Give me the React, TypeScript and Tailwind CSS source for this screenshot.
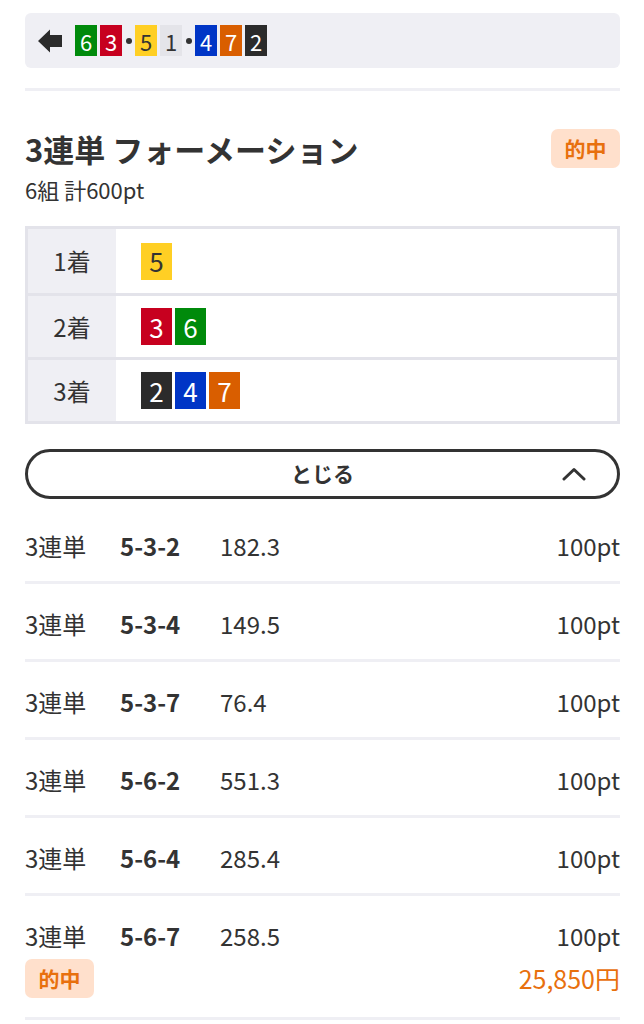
import React from "react";

const C: Record<string, string> = {
  "1": "bg-[#e4e4e9] text-[#333333]",
  "2": "bg-[#2b2b2b] text-white",
  "3": "bg-[#c7001f] text-white",
  "4": "bg-[#0035c6] text-white",
  "5": "bg-[#ffcf24] text-[#333333]",
  "6": "bg-[#008a0b] text-white",
  "7": "bg-[#d95e00] text-white",
};

function SmallBox({ n }: { n: string }) {
  return (
    <div className={`w-[22px] h-[31px] flex items-center justify-center text-[22px] leading-none ${C[n]}`}>
      {n}
    </div>
  );
}

function BigBox({ n }: { n: string }) {
  return (
    <div className={`w-[31px] h-[37px] flex items-center justify-center text-[26px] leading-none ${C[n]}`}>
      {n}
    </div>
  );
}

function Dot() {
  return (
    <div className="w-[13px] flex items-center justify-center">
      <div className="w-[6px] h-[6px] rounded-full bg-[#333333]" />
    </div>
  );
}

const rows = [
  { c: "5-3-2", o: "182.3" },
  { c: "5-3-4", o: "149.5" },
  { c: "5-3-7", o: "76.4" },
  { c: "5-6-2", o: "551.3" },
  { c: "5-6-4", o: "285.4" },
  { c: "5-6-7", o: "258.5", hit: true },
];

export default function App() {
  return (
    <div
      className="w-[644px] min-h-[1024px] bg-white text-[#333333] pl-[25px] pr-[24px] pt-[13px]"
      style={{ fontFamily: '"Noto Sans CJK JP", "Noto Sans", sans-serif' }}
    >
      <div className="h-[55px] rounded-[6px] bg-[#efeff4] flex items-center pl-[13px]">
        <svg width="24" height="24" viewBox="0 0 24 24" className="mr-[13px]">
          <path d="M0 12 L12 0.5 L12 6 L24 6 L24 18 L12 18 L12 23.5 Z" fill="#2b2b2b" />
        </svg>
        <div className="flex items-center gap-[3px]">
          <SmallBox n="6" />
          <SmallBox n="3" />
        </div>
        <Dot />
        <div className="flex items-center gap-[3px]">
          <SmallBox n="5" />
          <SmallBox n="1" />
        </div>
        <Dot />
        <div className="flex items-center gap-[3px]">
          <SmallBox n="4" />
          <SmallBox n="7" />
          <SmallBox n="2" />
        </div>
      </div>

      <div className="mt-[20px] h-[3px] bg-[#efeff4]" />

      <div className="mt-[38px] flex items-start justify-between">
        <div>
          <div className="text-[31px] font-bold leading-[40px]">3連単 フォーメーション</div>
          <div className="text-[22px] leading-[30px] mt-[5px]">6組 計600pt</div>
        </div>
        <div className="w-[69px] h-[39px] rounded-[7px] bg-[#ffe0cc] text-[#e8700e] font-bold text-[21px] flex items-center justify-center">
          的中
        </div>
      </div>

      <div className="mt-[22px] border-[3px] border-[#e3e3ea]">
        {[["1着", ["5"]], ["2着", ["3", "6"]], ["3着", ["2", "4", "7"]]].map(([label, nums], i) => (
          <div key={i} className={`flex h-[64px] ${i > 0 ? "border-t-[3px] border-[#e3e3ea]" : ""}`}>
            <div className="w-[88px] bg-[#efeff4] flex items-center justify-center text-[24px]">{label as string}</div>
            <div className="flex-1 flex items-center gap-[3px] pl-[25px]">
              {(nums as string[]).map((n) => (
                <BigBox key={n} n={n} />
              ))}
            </div>
          </div>
        ))}
      </div>

      <div className="mt-[25px] h-[50px] rounded-full border-[3px] border-[#333333] relative flex items-center justify-center">
        <span className="text-[21px] font-bold">とじる</span>
        <svg width="24" height="14" viewBox="0 0 24 14" className="absolute right-[31px] top-[15px]">
          <path d="M2 12 L12 2.5 L22 12" fill="none" stroke="#333333" strokeWidth="3" strokeLinecap="round" strokeLinejoin="round" />
        </svg>
      </div>

      <div className="mt-[7px]">
        {rows.map((r, i) => (
          <div key={i} className="border-b-[3px] border-[#efeff4] pt-[24px] pb-[20px]">
            <div className="flex items-center text-[24px] leading-[31px]">
              <div className="w-[95px]">3連単</div>
              <div className="w-[100px] font-bold">{r.c}</div>
              <div className="flex-1">{r.o}</div>
              <div>100pt</div>
            </div>
            {r.hit && (
              <div className="flex items-center justify-between mt-[8px] mb-[-1px]">
                <div className="w-[69px] h-[39px] rounded-[7px] bg-[#ffe0cc] text-[#e8700e] font-bold text-[21px] flex items-center justify-center">
                  的中
                </div>
                <div className="text-[25px] text-[#e8700e] leading-[39px]">25,850円</div>
              </div>
            )}
          </div>
        ))}
      </div>
    </div>
  );
}
